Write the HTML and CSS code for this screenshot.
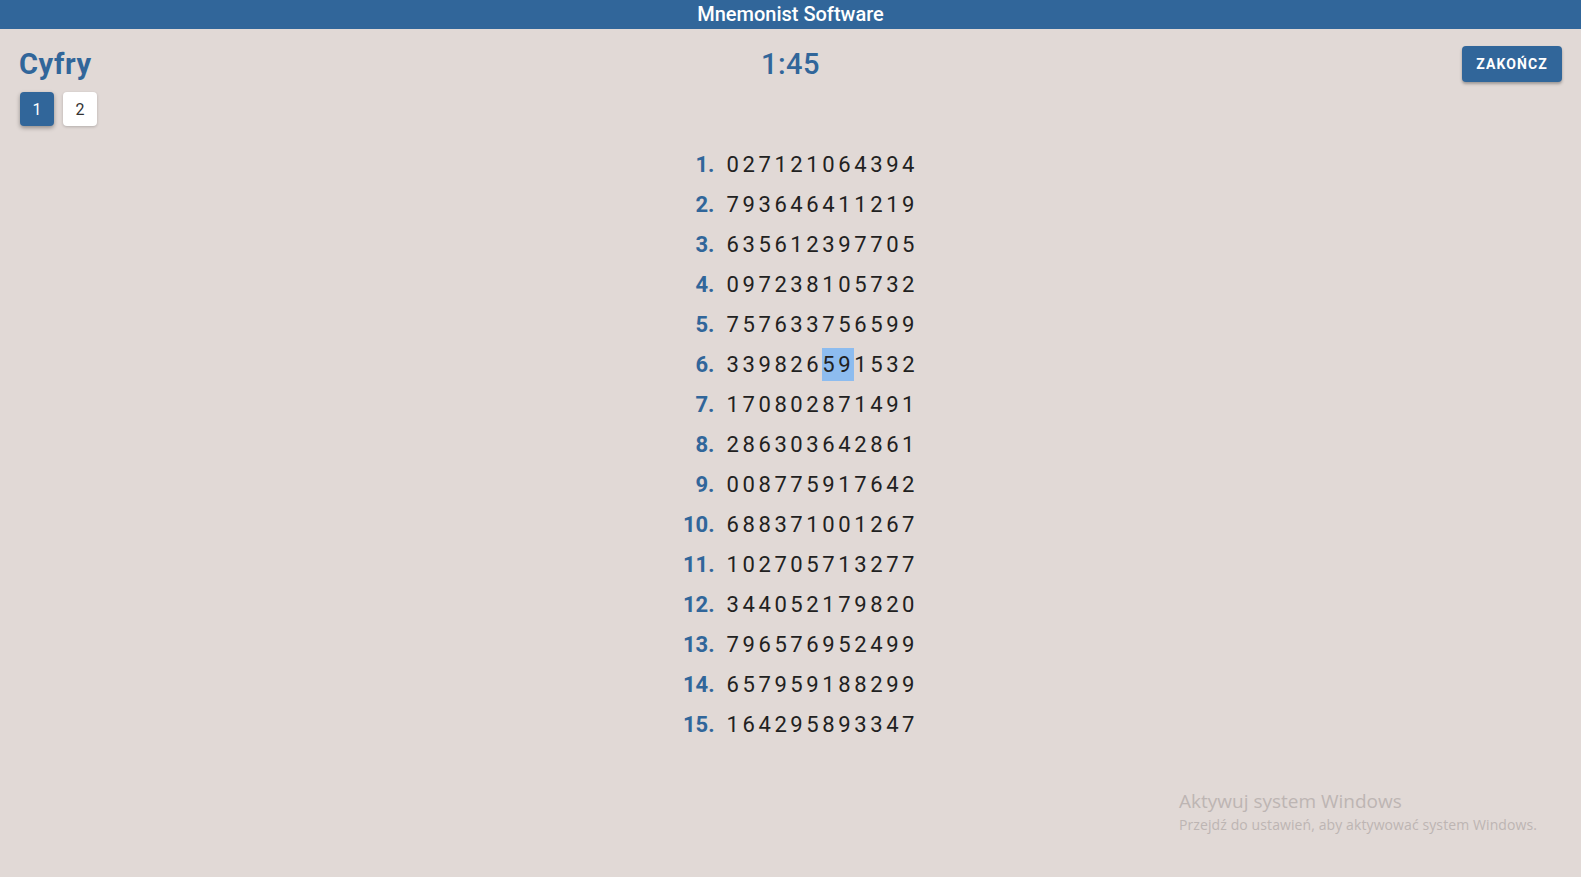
FILE: index.html
```html
<!DOCTYPE html>
<html lang="pl">
<head>
<meta charset="utf-8">
<title>Mnemonist Software</title>
<link rel="stylesheet" href="styles.css">
</head>
<body>
<header class="appbar">Mnemonist Software</header>
<main class="page">
  <div class="topbar">
    <div class="left">
      <h1 class="title">Cyfry</h1>
      <div class="pages">
        <button class="pg active">1</button>
        <button class="pg">2</button>
      </div>
    </div>
    <div class="timer">1:45</div>
    <div class="right">
      <button class="finish">ZAKOŃCZ</button>
    </div>
  </div>
  <div class="rows">
    <div class="row"><span class="num">1.</span><span class="digits">027121064394</span></div>
    <div class="row"><span class="num">2.</span><span class="digits">793646411219</span></div>
    <div class="row"><span class="num">3.</span><span class="digits">635612397705</span></div>
    <div class="row"><span class="num">4.</span><span class="digits">097238105732</span></div>
    <div class="row"><span class="num">5.</span><span class="digits">757633756599</span></div>
    <div class="row"><span class="num">6.</span><span class="digits">339826<mark class="hl">59</mark>1532</span></div>
    <div class="row"><span class="num">7.</span><span class="digits">170802871491</span></div>
    <div class="row"><span class="num">8.</span><span class="digits">286303642861</span></div>
    <div class="row"><span class="num">9.</span><span class="digits">008775917642</span></div>
    <div class="row"><span class="num">10.</span><span class="digits">688371001267</span></div>
    <div class="row"><span class="num">11.</span><span class="digits">102705713277</span></div>
    <div class="row"><span class="num">12.</span><span class="digits">344052179820</span></div>
    <div class="row"><span class="num">13.</span><span class="digits">796576952499</span></div>
    <div class="row"><span class="num">14.</span><span class="digits">657959188299</span></div>
    <div class="row"><span class="num">15.</span><span class="digits">164295893347</span></div>
  </div>
</main>
<div class="watermark">
  <div class="wm1">Aktywuj system Windows</div>
  <div class="wm2">Przejdź do ustawień, aby aktywować system Windows.</div>
</div>
</body>
</html>
```
FILE: styles.css
```css
* { box-sizing: border-box; }
html, body {
  margin: 0;
  padding: 0;
  height: 100%;
}
body {
  background: #e1d9d6;
  font-family: Roboto, "Liberation Sans", Arial, sans-serif;
  color: #212121;
  overflow: hidden;
}
.appbar {
  height: 29px;
  background: #31669a;
  color: #ffffff;
  font-size: 20px;
  font-weight: 500;
  line-height: 29px;
  text-align: center;
}
.page {
  padding: 0 19px;
}
.topbar {
  display: grid;
  grid-template-columns: 1fr auto 1fr;
  align-items: start;
  padding-top: 17px;
}
.title {
  margin: 0;
  font-size: 29px;
  font-weight: 700;
  letter-spacing: 0.6px;
  line-height: 37px;
  color: #31669a;
  height: 37px;
}
.pages {
  display: flex;
  gap: 9px;
  padding-left: 1px;
  margin-top: 9px;
}
.pg {
  width: 34px;
  height: 34px;
  border: none;
  border-radius: 4px;
  background: #ffffff;
  color: #333333;
  font-family: Roboto, "Liberation Sans", Arial, sans-serif;
  font-size: 16px;
  padding: 0;
  box-shadow: 0 1px 3px rgba(0,0,0,0.2);
}
.pg.active {
  background: #31669a;
  color: #ffffff;
  box-shadow: 0 2px 4px rgba(0,0,0,0.35);
}
.timer {
  font-size: 29px;
  font-weight: 500;
  color: #31669a;
  line-height: 37px;
  letter-spacing: 0.5px;
}
.right {
  display: flex;
  justify-content: flex-end;
}
.finish {
  width: 100px;
  height: 36px;
  border: none;
  border-radius: 4px;
  background: #31669a;
  color: #ffffff;
  font-family: Roboto, "Liberation Sans", Arial, sans-serif;
  font-size: 14px;
  font-weight: 700;
  letter-spacing: 1.1px;
  padding: 0;
  box-shadow: 0 2px 3px rgba(0,0,0,0.3);
}
.rows {
  display: grid;
  grid-template-columns: auto auto;
  justify-content: center;
  column-gap: 12px;
  padding-left: 20px;
  margin-top: 19px;
}
.row {
  display: contents;
}
.num {
  text-align: right;
  font-size: 22px;
  font-weight: 700;
  color: #31669a;
  line-height: 40px;
}
.digits {
  font-size: 22px;
  letter-spacing: 3.6px;
  color: #212121;
  line-height: 40px;
}
.hl {
  background: #8dbcef;
  color: #212121;
  display: inline-block;
  line-height: 33px;
}
.watermark {
  position: absolute;
  left: 1179px;
  top: 789px;
  color: #bdb5b3;
  font-family: "Open Sans", "Noto Sans", sans-serif;
}
.wm1 {
  font-size: 19px;
  line-height: 25px;
}
.wm2 {
  font-size: 14px;
  letter-spacing: 0.1px;
  line-height: 22px;
}
```
